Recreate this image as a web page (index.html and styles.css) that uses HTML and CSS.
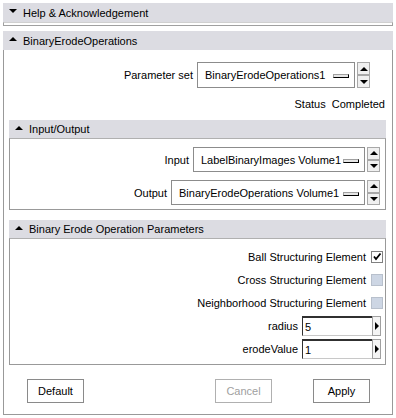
FILE: index.html
```html
<!DOCTYPE html>
<html lang="en">
<head>
<meta charset="UTF-8">
<title>BinaryErodeOperations</title>
<link rel="stylesheet" href="styles.css">
</head>
<body>
<div class="page">
    <div class="bar"><span class="tri down"></span>Help &amp; Acknowledgement</div>
    <div class="collapsed"></div>

    <div class="bar"><span class="tri up"></span>BinaryErodeOperations</div>
    <div class="panel">
        <div class="row param-row">
            <span class="label">Parameter set</span>
            <div class="combo combo-param">BinaryErodeOperations1<span class="menu-ind"></span></div>
            <div class="spin"><span class="spin-btn"><i class="arrow-up"></i></span><span class="spin-btn"><i class="arrow-down"></i></span></div>
        </div>
        <div class="status">Status&nbsp; Completed</div>

        <div class="sub-bar"><span class="tri up"></span>Input/Output</div>
        <div class="sub-panel io">
            <div class="row io-row">
                <span class="label">Input</span>
                <div class="combo combo-in">LabelBinaryImages Volume1<span class="menu-ind"></span></div>
                <div class="spin"><span class="spin-btn"><i class="arrow-up"></i></span><span class="spin-btn"><i class="arrow-down"></i></span></div>
            </div>
            <div class="row io-row">
                <span class="label">Output</span>
                <div class="combo combo-out">BinaryErodeOperations Volume1<span class="menu-ind"></span></div>
                <div class="spin"><span class="spin-btn"><i class="arrow-up"></i></span><span class="spin-btn"><i class="arrow-down"></i></span></div>
            </div>
        </div>

        <div class="sub-bar"><span class="tri up"></span>Binary Erode Operation Parameters</div>
        <div class="sub-panel params">
            <div class="row check-row">
                <span class="label">Ball Structuring Element</span>
                <span class="check checked">
                    <svg width="10" height="10" viewBox="0 0 10 10"><path d="M2 4.5 L4 7 L8.5 1.5" fill="none" stroke="#000" stroke-width="1.8"/></svg>
                </span>
            </div>
            <div class="row check-row">
                <span class="label">Cross Structuring Element</span>
                <span class="check"></span>
            </div>
            <div class="row check-row">
                <span class="label">Neighborhood Structuring Element</span>
                <span class="check"></span>
            </div>
            <div class="row num-row">
                <span class="label">radius</span>
                <div class="num">5</div>
                <span class="num-btn"><i class="arrow-right"></i></span>
            </div>
            <div class="row num-row">
                <span class="label">erodeValue</span>
                <div class="num">1</div>
                <span class="num-btn"><i class="arrow-right"></i></span>
            </div>
        </div>

        <div class="buttons">
            <button class="btn btn-default">Default</button>
            <button class="btn btn-cancel" disabled>Cancel</button>
            <button class="btn btn-apply">Apply</button>
        </div>
    </div>
</div>
</body>
</html>
```

FILE: styles.css
```css
body {
    margin: 0;
    background-color: #ffffff;
    font-family: "Liberation Sans", Arial, sans-serif;
    font-size: 11px;
    color: #000000;
}

.page {
    width: 390px;
    padding: 3px 3px 0 3px;
}

.bar {
    height: 19px;
    background-color: #dcdce2;
    display: flex;
    align-items: center;
    padding-left: 20px;
    position: relative;
}

.sub-bar {
    height: 18px;
    background-color: #dcdce2;
    display: flex;
    align-items: center;
    padding-left: 20px;
    margin: 10px 6px 0 5px;
    position: relative;
}

.tri {
    position: absolute;
    left: 6px;
    top: 6px;
    width: 0;
    height: 0;
    border-left: 4px solid transparent;
    border-right: 4px solid transparent;
}
.tri.down {
    border-top: 4px solid #000;
}
.tri.up {
    border-bottom: 4px solid #000;
}

.collapsed {
    height: 2px;
    border: 1px solid #a0a0a0;
    border-top-color: #d0d0d0;
    margin-bottom: 5px;
}

.panel {
    border: 1px solid #999999;
    border-top: none;
    height: 365px;
    padding-top: 12px;
    box-sizing: border-box;
}

.row {
    display: flex;
    align-items: center;
    justify-content: flex-end;
}

.label {
    margin-right: 4px;
}

.param-row {
    height: 26px;
    margin-right: 22px;
}

.combo {
    height: 24px;
    border: 1px solid #8c8c8c;
    background-color: #ffffff;
    display: flex;
    align-items: center;
    padding-left: 7px;
    position: relative;
    box-sizing: border-box;
    height: 26px;
}
.combo-param { width: 158px; }
.combo-in { width: 172px; height: 25px; }
.combo-out { width: 194px; height: 25px; }

.menu-ind {
    position: absolute;
    right: 5px;
    top: 50%;
    margin-top: -1px;
    width: 14px;
    height: 2px;
    background-color: #e6e6e6;
    border: 1px solid #a0a0a0;
    border-right-color: #000;
    border-bottom-color: #000;
}

.spin {
    display: flex;
    flex-direction: column;
    justify-content: space-between;
    margin-left: 2px;
    height: 26px;
}
.io-row .spin { height: 25px; }

.spin-btn {
    width: 11px;
    height: 11px;
    border: 1px solid #a8a8a8;
    background-color: #f0f0f0;
    display: flex;
    align-items: center;
    justify-content: center;
}

.arrow-up, .arrow-down, .arrow-right {
    display: block;
    width: 0;
    height: 0;
}
.arrow-up {
    border-left: 4px solid transparent;
    border-right: 4px solid transparent;
    border-bottom: 4px solid #000;
}
.arrow-down {
    border-left: 4px solid transparent;
    border-right: 4px solid transparent;
    border-top: 4px solid #000;
}
.arrow-right {
    border-top: 4px solid transparent;
    border-bottom: 4px solid transparent;
    border-left: 4px solid #000;
}

.status {
    text-align: right;
    margin: 10px 7px 0 0;
    height: 12px;
    line-height: 12px;
}

.sub-panel {
    margin: 0 6px 0 5px;
    border: 1px solid #999999;
    border-top-color: #b0b0b0;
}

.io {
    height: 72px;
    padding: 8px 5px 0 0;
    box-sizing: border-box;
}
.io-row {
    height: 25px;
    margin-bottom: 8px;
}

.params {
    height: 127px;
    padding: 6px 0 0 0;
    box-sizing: border-box;
}

.check-row {
    height: 23px;
    padding-right: 2px;
}

.check {
    width: 10px;
    height: 10px;
    border: 1px solid #b8c0cc;
    background-color: #cdd6e4;
    margin-left: 1px;
    display: flex;
    align-items: center;
    justify-content: center;
}
.check.checked {
    background-color: #ffffff;
    border-color: #808080;
}

.num-row {
    height: 20px;
    margin-top: 2px;
    margin-bottom: 3px;
    padding-right: 4px;
}

.num {
    width: 70px;
    height: 20px;
    box-sizing: border-box;
    border-top: 2px solid #303030;
    border-left: 1px solid #303030;
    border-bottom: 1px solid #c8c8c8;
    background-color: #ffffff;
    padding-left: 2px;
    display: flex;
    align-items: center;
}

.num-btn {
    width: 9px;
    height: 20px;
    box-sizing: border-box;
    border: 1px solid #a0a0a0;
    background-color: #f4f4f4;
    display: flex;
    align-items: center;
    justify-content: center;
}

.buttons {
    display: flex;
    margin-top: 14px;
}

.btn {
    width: 57px;
    height: 24px;
    background-color: #ffffff;
    border: 1px solid #8a8a8a;
    font-family: "Liberation Sans", Arial, sans-serif;
    font-size: 11px;
    color: #000000;
    padding: 0;
}
.btn-default { margin-left: 23px; }
.btn-cancel {
    margin-left: auto;
    color: #a0a0a0;
    border-color: #b0b0b0;
}
.btn-apply {
    margin-left: 41px;
    margin-right: 22px;
}
```
